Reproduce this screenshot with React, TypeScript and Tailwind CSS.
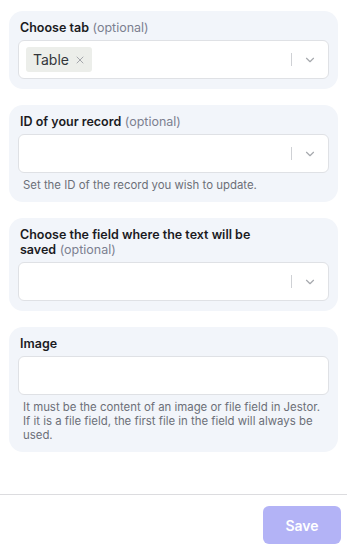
import { X, ChevronDown } from 'lucide-react';

function Field({
  label,
  optional,
  help,
  children,
}: {
  label: string;
  optional?: boolean;
  help?: string;
  children: React.ReactNode;
}) {
  return (
    <div className="bg-[#f2f5fa] rounded-[14px] px-[9px] pt-[9px] pb-[10px]">
      <div className="pl-[2px] text-[12.5px] leading-[15px] font-semibold text-[#1b1b1f] mb-[5px] pr-16">
        {label}
        {optional && <span className="font-normal text-[#7c8090]"> (optional)</span>}
      </div>
      {children}
      {help && (
        <p className="mt-[5px] pl-[5px] pr-[2px] text-[11.4px] leading-[14px] text-[#6c6f78]">{help}</p>
      )}
    </div>
  );
}

function Select({ children }: { children?: React.ReactNode }) {
  return (
    <div className="h-[39px] bg-white border border-[#dfe1e5] rounded-[6px] flex items-center pl-[7px]">
      <div className="flex-1 flex items-center">{children}</div>
      <div className="w-px h-[13px] bg-[#cfd1d5]" />
      <div className="w-[36px] flex justify-center">
        <ChevronDown className="w-[14px] h-[14px] text-[#a6a9ae]" strokeWidth={2} />
      </div>
    </div>
  );
}

export default function App() {
  return (
    <div
      className="w-[347px] h-[551px] bg-white flex flex-col"
      style={{ fontFamily: 'Inter, "Noto Sans", sans-serif' }}
    >
      <div className="flex-1 px-[9px] pt-[11px] flex flex-col gap-[16px]">
        <Field label="Choose tab" optional>
          <Select>
            <div className="h-[25px] bg-[#eceeea] rounded-[3px] flex items-center pl-[7px] pr-[6px] gap-[5px]">
              <span className="text-[14px] text-[#33363b]">Table</span>
              <X className="w-[12px] h-[12px] text-[#9a9da2]" strokeWidth={1.75} />
            </div>
          </Select>
        </Field>

        <Field label="ID of your record" optional help="Set the ID of the record you wish to update.">
          <Select />
        </Field>

        <Field label="Choose the field where the text will be saved" optional>
          <Select />
        </Field>

        <Field
          label="Image"
          help="It must be the content of an image or file field in Jestor. If it is a file field, the first file in the field will always be used."
        >
          <div className="h-[39px] bg-white border border-[#dfe1e5] rounded-[6px]" />
        </Field>
      </div>

      <div className="border-t border-[#dcdcdf] flex justify-end pt-[11px] pb-[7px] pr-[6px]">
        <button className="w-[78px] h-[38px] rounded-[6px] bg-[#b3b3f6] text-white text-[14px] font-semibold">
          Save
        </button>
      </div>
    </div>
  );
}
